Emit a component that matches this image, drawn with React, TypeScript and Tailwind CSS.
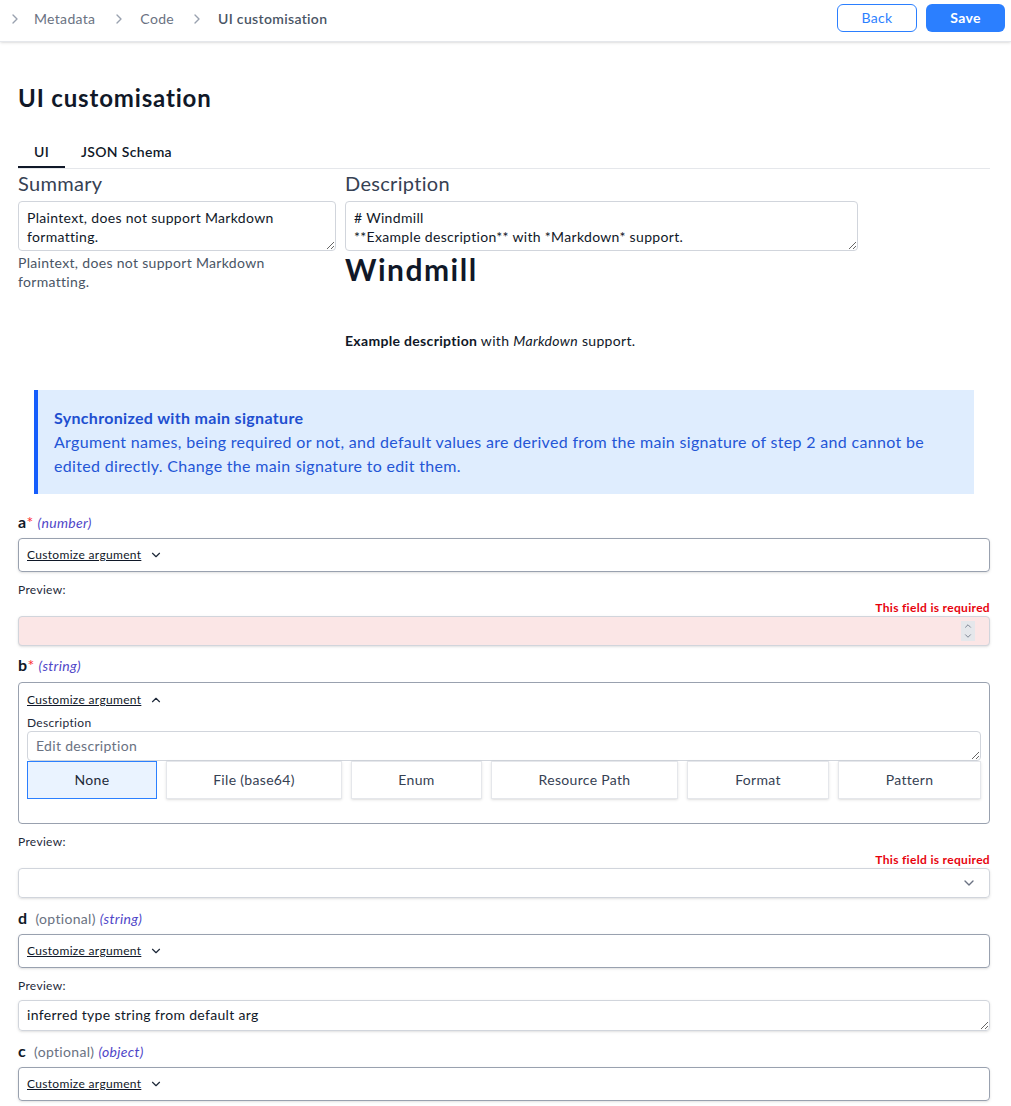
import React from 'react';
import { ChevronRight, ChevronDown, ChevronUp } from 'lucide-react';

type ArgProps = {
  name: string;
  type: string;
  required?: boolean;
};

const ArgLabel: React.FC<ArgProps> = ({ name, type, required }) => (
  <div className="flex items-baseline h-6 leading-6">
    <span className="text-base font-bold text-gray-900">{name}</span>
    {required ? (
      <span className="text-base text-red-500">*</span>
    ) : (
      <span className="ml-2 text-sm text-gray-500">(optional)</span>
    )}
    <span className="ml-1 text-sm italic text-[#4f46c8]">({type})</span>
  </div>
);

const CustomizeHeader: React.FC<{ open?: boolean }> = ({ open }) => (
  <div className="flex items-center h-4">
    <span className="text-xs underline text-gray-900 pr-1">Customize argument</span>
    {open ? (
      <ChevronUp size={14} className="ml-1 text-gray-800" />
    ) : (
      <ChevronDown size={14} className="ml-1 text-gray-800" />
    )}
  </div>
);

const CollapsedBox: React.FC = () => (
  <div className="mt-1 h-[34px] rounded-sm border border-gray-400 px-2 py-2 shadow-sm">
    <CustomizeHeader />
  </div>
);

const PreviewLabel: React.FC = () => <div className="mt-[10px] text-xs leading-4 text-gray-800">Preview:</div>;

const Required: React.FC = () => (
  <div className="mt-0.5 text-right text-xs leading-4 font-bold text-red-600">This field is required</div>
);

const formats = [
  { label: 'None', w: 'w-[130px]', active: true },
  { label: 'File (base64)', w: 'w-[176px]' },
  { label: 'Enum', w: 'w-[131px]' },
  { label: 'Resource Path', w: 'w-[187px]' },
  { label: 'Format', w: 'w-[142px]' },
  { label: 'Pattern', w: 'w-[143px]' },
];

const App: React.FC = () => {
  return (
    <div className="min-h-screen bg-white font-['Lato','Noto_Sans',sans-serif] tracking-[0.02em] text-gray-900">
      {/* top bar */}
      <header className="flex h-[42px] items-start justify-between border-b border-gray-200 shadow-sm">
        <nav className="flex items-center h-[37px] pl-[7px] text-sm text-gray-500">
          <ChevronRight size={16} className="text-gray-400" />
          <span className="ml-[11px]">Metadata</span>
          <ChevronRight size={16} className="ml-[16px] text-gray-400" />
          <span className="ml-[13px]">Code</span>
          <ChevronRight size={16} className="ml-[15px] text-gray-400" />
          <span className="ml-[13px] font-semibold text-gray-600">UI customisation</span>
        </nav>
        <div className="flex gap-[9px] pt-1 pr-[6px]">
          <button className="h-[28px] w-[80px] rounded-md border border-blue-500 text-sm text-blue-500">Back</button>
          <button className="h-[28px] w-[79px] rounded-md bg-blue-500 text-sm font-bold text-white">Save</button>
        </div>
      </header>

      <main className="pl-[18px] pr-[21px]">
        <h1 className="mt-10 text-2xl leading-8 font-bold tracking-[0.035em]">UI customisation</h1>

        <div className="mt-6 flex border-b border-gray-200 text-sm font-semibold">
          <div className="border-b-2 border-gray-900 px-4 pt-1 pb-[4px] leading-5">UI</div>
          <div className="px-4 pt-1 pb-[4px] leading-5">JSON Schema</div>
        </div>

        <div className="flex gap-[9px]">
          <div className="w-[318px]">
            <div className="text-xl leading-7 text-gray-700">Summary</div>
            <textarea
              readOnly
              className="mt-1 block h-[50px] w-full rounded border border-gray-300 px-2 pt-[6px] pb-1 text-sm leading-[19px] text-gray-900"
              defaultValue="Plaintext, does not support Markdown formatting."
            />
            <p className="mt-0.5 max-w-[300px] text-sm leading-[19px] text-gray-600">
              Plaintext, does not support Markdown formatting.
            </p>
          </div>
          <div className="w-[513px]">
            <div className="text-xl leading-7 text-gray-700">Description</div>
            <textarea
              readOnly
              className="mt-1 block h-[50px] w-full rounded border border-gray-300 px-2 pt-[6px] pb-1 text-sm leading-[19px] text-gray-900"
              defaultValue={'# Windmill\n**Example description** with *Markdown* support.'}
            />
            <h2 className="text-3xl leading-9 font-bold tracking-[0.05em] text-gray-900">Windmill</h2>
            <p className="mt-[44px] text-sm leading-5 text-gray-900">
              <strong>Example description</strong> with <em>Markdown</em> support.
            </p>
          </div>
        </div>

        <div className="mx-4 mt-[39px] border-l-4 border-blue-600 bg-[#dfedfe] px-4 py-4 text-[#2456d6]">
          <div className="font-bold leading-6 text-[#1e4fd0]">Synchronized with main signature</div>
          <div className="leading-6">
            Argument names, being required or not, and default values are derived from the main signature of step 2 and
            cannot be edited directly. Change the main signature to edit them.
          </div>
        </div>

        {/* a */}
        <div className="mt-[16px]">
          <ArgLabel name="a" type="number" required />
          <CollapsedBox />
          <PreviewLabel />
          <Required />
          <div className="flex h-[30px] items-center justify-end rounded border border-gray-300 bg-[#fbe6e6] pr-[14px] shadow-sm">
            <div className="flex h-[20px] w-[14px] flex-col items-center justify-center bg-gray-200 text-gray-500">
              <ChevronUp size={10} />
              <ChevronDown size={10} />
            </div>
          </div>
        </div>

        {/* b */}
        <div className="mt-[7px]">
          <ArgLabel name="b" type="string" required />
          <div className="mt-[5px] rounded-sm border border-gray-400 px-2 pt-[9px] pb-6">
            <CustomizeHeader open />
            <div className="mt-[7px] text-xs leading-4 text-gray-800">Description</div>
            <textarea
              readOnly
              placeholder="Edit description"
              className="block h-[30px] w-full rounded border border-gray-300 px-2 py-1 text-sm leading-5 text-gray-900 placeholder:text-gray-500"
            />
            <div className="flex gap-[9px]">
              {formats.map((f) => (
                <button
                  key={f.label}
                  className={`h-[38px] ${f.w} border text-sm ${
                    f.active ? 'border-blue-500 bg-[#eaf3ff] text-gray-800' : 'border-gray-200 bg-white text-gray-700 shadow-sm'
                  }`}
                >
                  {f.label}
                </button>
              ))}
            </div>
          </div>
          <PreviewLabel />
          <Required />
          <div className="flex h-[30px] items-center justify-end rounded border border-gray-300 pr-3 shadow-sm">
            <ChevronDown size={16} className="text-gray-500" />
          </div>
        </div>

        {/* d */}
        <div className="mt-2">
          <ArgLabel name="d" type="string" />
          <CollapsedBox />
          <PreviewLabel />
          <textarea
            readOnly
            className="mt-[6px] block h-[31px] w-full rounded border border-gray-300 px-2 py-1 text-sm leading-5 text-gray-900 shadow-sm"
            defaultValue="inferred type string from default arg"
          />
        </div>

        {/* c */}
        <div className="mt-2">
          <ArgLabel name="c" type="object" />
          <CollapsedBox />
        </div>
      </main>
    </div>
  );
};

export default App;
